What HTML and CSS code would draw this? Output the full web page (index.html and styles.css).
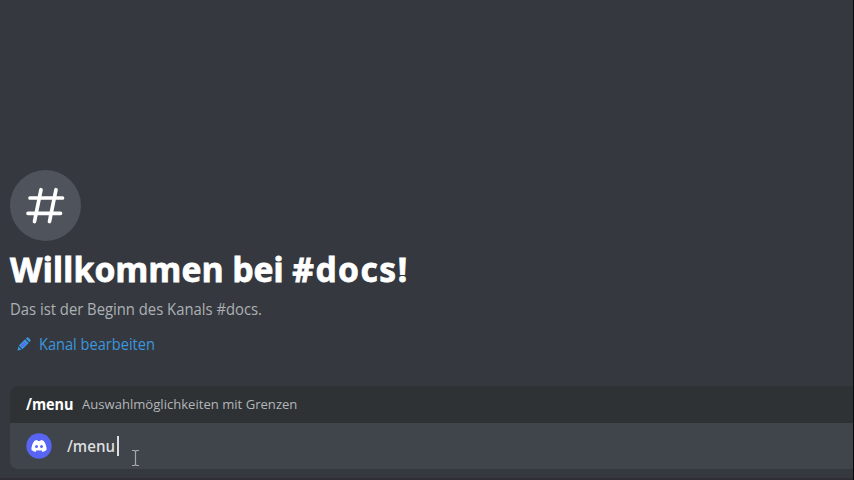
FILE: index.html
```html
<!DOCTYPE html>
<html lang="de">
<head>
<meta charset="utf-8">
<title>#docs</title>
<link rel="stylesheet" href="styles.css">
</head>
<body>
<main class="channel">
  <section class="welcome">
    <div class="badge">
      <svg viewBox="0 0 71 71" width="71" height="71"><path d="M31 19.700 24.500 51.500M46 19.700 39.500 51.500M20 28H52.500M18 43.300H50.500"/></svg>
    </div>
    <h1><span class="greeting">Willkommen</span> bei <span class="name">#docs!</span></h1>
    <p><span>Das ist der Beginn des Kanals #docs.</span></p>
    <a class="edit">
      <svg viewBox="0 0 14 14" width="14" height="14"><path d="M.5 13.500 1.300 9.500 4.500 12.700ZM1.800 8.500 8 2.300 11.700 6 5.500 12.200ZM8.800 1.600 10 .6Q10.800 0 11.600.8L13.200 2.400Q14 3.200 13.400 4L12.400 5.200Z" fill="#3a94dc"/><path d="M4 8.800 7.800 5 9.200 6.400 5.400 10.200Z" fill="#6065f5"/></svg>
      <span>Kanal bearbeiten</span>
    </a>
  </section>
  <section class="composer">
    <div class="suggestion"><b><span>/menu</span></b><span class="hint">Auswahlmöglichkeiten mit Grenzen</span></div>
    <div class="input">
      <svg class="logo" viewBox="0 0 26 26" width="26" height="26"><circle cx="13" cy="13" r="12.700" fill="#5865f2"/><path d="M8.500 7.800Q10 7.100 11.300 7L11.800 8Q13 7.800 14.200 8L14.700 7Q16 7.100 17.500 7.800Q20.800 12 20.500 17Q18.500 18.400 16.500 18.900L15.400 17.300Q13 17.900 10.600 17.300L9.500 18.900Q7.500 18.400 5.500 17Q5.200 12 8.500 7.800Z" fill="#fff"/><ellipse cx="10.500" cy="13.500" rx="1.400" ry="1.600" fill="#5865f2"/><ellipse cx="15.500" cy="13.500" rx="1.400" ry="1.600" fill="#5865f2"/></svg>
      <span class="typed"><span>/menu</span></span><i class="caret"></i>
    </div>
  </section>
</main>
<svg class="pointer" viewBox="0 0 9 18" width="9" height="18"><path d="M1 1.500H3.500L4.500 2.500 5.500 1.500H8M4.500 2.500V15.500M1 16.500H3.500L4.500 15.500 5.500 16.500H8"/></svg>
</body>
</html>
```
FILE: styles.css
```css
* { box-sizing: border-box; }
body {
  margin: 0;
  width: 854px;
  height: 480px;
  overflow: hidden;
  background: #35393f;
  border-right: 1px solid #090a0b;
  font-family: "Open Sans", "Noto Sans", sans-serif;
  white-space: nowrap;
}
.channel {
  height: 480px;
  padding: 170px 0 9px 10px;
  border-bottom: 2px solid #302e35;
  display: flex;
  flex-direction: column;
  justify-content: space-between;
}
p span, .edit span, .suggestion span, .typed span {
  display: inline-block;
  transform-origin: left center;
}
.badge { width: 71px; height: 71px; border-radius: 50%; background: #4f545c; }
.badge svg { display: block; }
.badge path { fill: none; stroke: #fff; stroke-width: 3.7; stroke-linecap: round; }
h1 {
  margin: 8px 0 0;
  font: 700 33.5px/40px "Noto Sans", sans-serif;
  color: #fff;
  -webkit-text-stroke: .8px #fff;
}
.greeting { letter-spacing: .25px; }
.name { letter-spacing: 1.5px; }
p { margin: 9px 0 0; font-size: 16px; line-height: 22px; color: #adb0b4; }
p span { transform: scaleX(.926); }
.edit {
  display: flex;
  align-items: center;
  height: 24px;
  margin: 12px 0 0 8px;
  font-size: 16px;
  font-weight: 500;
  color: #3b96dd;
}
.edit svg { margin: 0 8px 0 -1px; }
.edit span { transform: scaleX(.912); }
.composer { border-radius: 8px 0 0 8px; overflow: hidden; background: #40444b; }
.suggestion {
  display: flex;
  align-items: center;
  height: 37px;
  padding: 0 0 1px 16px;
  background: #2f3235;
}
.suggestion b { width: 56px; font-size: 16px; font-weight: 700; color: #fff; }
.suggestion b span { transform: scaleX(.9); }
.suggestion .hint { font-size: 13.5px; font-weight: 500; color: #b3b6b9; transform: scaleX(.969); }
.input { display: flex; align-items: center; height: 46px; padding-left: 16px; }
.logo { margin-right: 15px; }
.typed { width: 50px; font-size: 16px; font-weight: 600; color: #dcddde; }
.typed span { transform: scaleX(.94); }
.caret { width: 1.5px; height: 20px; background: #dcddde; }
.pointer { position: absolute; left: 131px; top: 449px; fill: none; stroke: #a4a7ab; stroke-width: 1.2; }
```
